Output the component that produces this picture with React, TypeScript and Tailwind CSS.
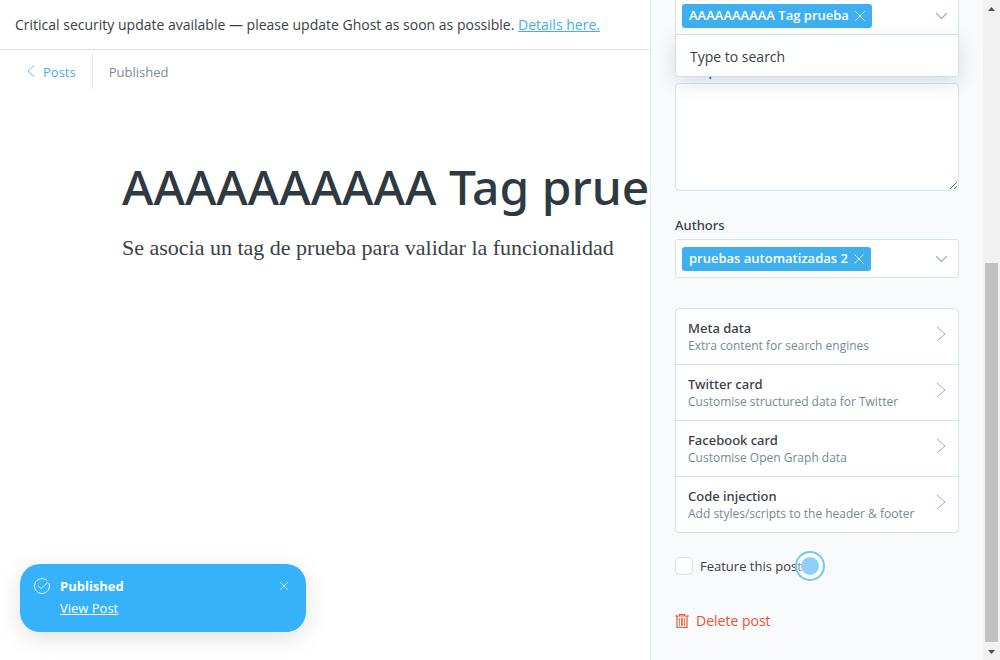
import type { ReactNode } from 'react';

type IconProps = { className?: string };

function CloseIcon({ className }: IconProps) {
  return (
    <svg viewBox="0 0 10 10" className={className} fill="none" stroke="currentColor" strokeLinecap="round" aria-hidden="true">
      <path d="M.7.7 9.3 9.3M9.3.7.7 9.3" />
    </svg>
  );
}

function ChevronDown({ className }: IconProps) {
  return (
    <svg viewBox="0 0 12 8" className={className} fill="none" stroke="currentColor" strokeWidth="1.2" strokeLinecap="round" strokeLinejoin="round" aria-hidden="true">
      <path d="M1.500 1.500 6.500 6.500 11.500 1.500" />
    </svg>
  );
}

function ChevronRight({ className }: IconProps) {
  return (
    <svg viewBox="0 0 10 16" className={className} fill="none" stroke="currentColor" strokeLinecap="round" strokeLinejoin="round" aria-hidden="true">
      <path d="M1.2 1.2 9 8 1.2 14.8" />
    </svg>
  );
}

function ChevronLeft({ className }: IconProps) {
  return (
    <svg viewBox="0 0 8 12" className={className} fill="none" stroke="currentColor" strokeWidth=".8" strokeLinecap="round" strokeLinejoin="round" aria-hidden="true">
      <path d="M7 .6 1 6 7 11.4" />
    </svg>
  );
}

function CheckCircle({ className }: IconProps) {
  return (
    <svg viewBox="0 0 16 16" className={className} fill="none" stroke="currentColor" strokeLinecap="round" strokeLinejoin="round" aria-hidden="true">
      <path d="M15.1 5.6A7.5 7.5 0 1 1 13 2.4" />
      <path d="m4.4 8 2.8 2.8 6.6-6.6" />
    </svg>
  );
}

function TrashIcon({ className }: IconProps) {
  return (
    <svg viewBox="0 0 14 15" className={className} fill="none" stroke="currentColor" aria-hidden="true">
      <path d="M0 2h14M4.500 2V.5h5V2M2 2v11.500h10V2" strokeWidth="1.2" />
      <path d="M4.500 4v8M6.500 4v8M7.500 4v8M9.500 4v8" strokeWidth=".8" />
    </svg>
  );
}

function Token({ children }: { children: ReactNode }) {
  return (
    <span className="flex h-6 items-center gap-1.5 rounded-[3px] bg-[#3eb0ef] px-[7px] text-[13px] font-semibold text-white">
      {children}
      <button type="button" aria-label="Remove" className="opacity-80">
        <CloseIcon className="size-2.5" />
      </button>
    </span>
  );
}

const sections = [
  { title: 'Meta data', text: 'Extra content for search engines' },
  { title: 'Twitter card', text: 'Customise structured data for Twitter' },
  { title: 'Facebook card', text: 'Customise Open Graph data' },
  { title: 'Code injection', text: 'Add styles/scripts to the header & footer' },
];

function Editor() {
  return (
    <main className="flex min-w-0 flex-1 flex-col overflow-hidden">
      <div className="flex h-[50px] shrink-0 items-center border-b border-[#dfe1e3] px-[15px] text-sm whitespace-nowrap text-[#394047]">
        <p>
          Critical security update available — please update Ghost as soon as possible.{' '}
          <a href="#update" className="text-[#3eb0ef] underline">Details here.</a>
        </p>
      </div>
      <header className="mt-[3px] flex h-9 shrink-0 items-stretch text-[13px] leading-9">
        <a href="#posts" className="flex items-center gap-2 border-r border-[#dfe8ee] pr-4 pl-[27px] text-[#3eb0ef]">
          <ChevronLeft className="h-3 w-2" />
          <span className="pt-0.5">Posts</span>
        </a>
        <span className="pt-px pl-4 text-[#7c8b9a]">Published</span>
      </header>
      <article className="pt-[68px] pl-[122px]">
        <h1 className="font-['Noto_Sans',sans-serif] text-[48px] leading-[60px] font-medium whitespace-nowrap text-[#2e3941]">
          AAAAAAAAAA Tag prueba
        </h1>
        <p className="mt-4 font-['Liberation_Serif',serif] text-[22px] leading-[30px] whitespace-nowrap text-[#3a4145]">
          Se asocia un tag de prueba para validar la funcionalidad
        </p>
      </article>
    </main>
  );
}

function Settings() {
  return (
    <aside className="w-[333px] shrink-0 overflow-hidden border-l border-[#e3eef7] bg-[#f8fafc] px-6 text-[#394047]">
      <div className="relative">
        <div className="flex h-[35px] items-center justify-between border-x border-b border-[#d5e3ec] bg-white pr-[11px] pb-[3px] pl-1.5">
          <Token>AAAAAAAAAA Tag prueba</Token>
          <ChevronDown className="h-2 w-3 text-[#9fb4c1]" />
        </div>
        <div className="absolute inset-x-0 top-full rounded-b border border-t-0 border-[#d5dfe6] bg-white px-3.5 pt-3 pb-[9px] text-sm leading-5 shadow-[0_6px_20px_rgba(57,73,92,0.16)]">
          Type to search
        </div>
      </div>
      <label htmlFor="excerpt" className="mt-6 block font-['Noto_Sans',sans-serif] text-[13px] leading-6 font-medium">Excerpt</label>
      <textarea id="excerpt" className="block h-[108px] w-full rounded border border-[#d5e3ec] bg-white" />

      <h4 className="mt-[22px] mb-0.5 font-['Noto_Sans',sans-serif] text-[13px] leading-6 font-medium">Authors</h4>
      <div className="flex h-[39px] items-center justify-between rounded-[3px] border border-[#d5e3ec] bg-white pr-[11px] pl-1.5">
        <Token>pruebas automatizadas 2</Token>
        <ChevronDown className="h-2 w-3 text-[#9fb4c1]" />
      </div>

      <ul className="mt-[30px] divide-y divide-[#d5e3ec] rounded border border-[#d5e3ec] bg-white">
        {sections.map((s) => (
          <li key={s.title}>
            <button type="button" className="flex w-full items-start justify-between px-3 pt-[9px] pb-[11px] text-left">
              <span>
                <span className="block font-['Noto_Sans',sans-serif] text-[13px] leading-5 font-medium">{s.title}</span>
                <span className="block text-xs leading-[15px] text-[#738a94]">{s.text}</span>
              </span>
              <ChevronRight className="mt-2 h-4 w-2.5 text-[#9baeb8]" />
            </button>
          </li>
        ))}
      </ul>

      <div className="relative mt-[23px]">
        <label className="flex items-center gap-[7px] text-[13px] leading-5">
          <input type="checkbox" className="size-[18px] appearance-none rounded border border-[#d5e3ec] bg-white" />
          Feature this post
        </label>
        <span className="absolute -top-[5px] left-[120px] flex size-[30px] items-center justify-center rounded-full border-2 border-[#78c6f4] bg-white/40">
          <span className="size-[18px] rounded-full bg-[#8fd0f8]" />
        </span>
      </div>

      <button type="button" className="mt-[35px] flex items-center gap-[7px] text-sm leading-5 text-[#f05230]">
        <TrashIcon className="h-[15px] w-3.5" />
        Delete post
      </button>
    </aside>
  );
}

function Scrollbar() {
  return (
    <div className="flex w-[17px] shrink-0 flex-col items-center bg-[#f1f1f1]" aria-hidden="true">
      <svg viewBox="0 0 17 17" className="size-[17px]" fill="#505050"><path d="M5 11h7L8.500 7z" /></svg>
      <div className="flex-1" />
      <div className="mb-px h-[379px] w-[13px] bg-[#c1c1c1]" />
      <svg viewBox="0 0 17 17" className="size-[17px]" fill="#505050"><path d="M5 7h7L8.500 11z" /></svg>
    </div>
  );
}

function Toast() {
  return (
    <div role="status" className="absolute bottom-7 left-5 flex w-[286px] items-start rounded-[20px] bg-[#35b2f9] px-3.5 pt-[11px] pb-[13px] text-[13px] leading-[22px] text-white shadow-[0_6px_24px_rgba(0,0,0,0.12)]">
      <CheckCircle className="mt-[3px] mr-2.5 size-4 opacity-90" />
      <div className="flex-1">
        <p className="font-bold">Published</p>
        <a href="#view" className="underline">View Post</a>
      </div>
      <button type="button" aria-label="Close" className="mt-[7px] mr-1">
        <CloseIcon className="size-2" />
      </button>
    </div>
  );
}

export default function App() {
  return (
    <div className="relative flex h-screen overflow-hidden bg-white font-['Open_Sans','Noto_Sans',sans-serif]">
      <Editor />
      <Settings />
      <Scrollbar />
      <Toast />
    </div>
  );
}
